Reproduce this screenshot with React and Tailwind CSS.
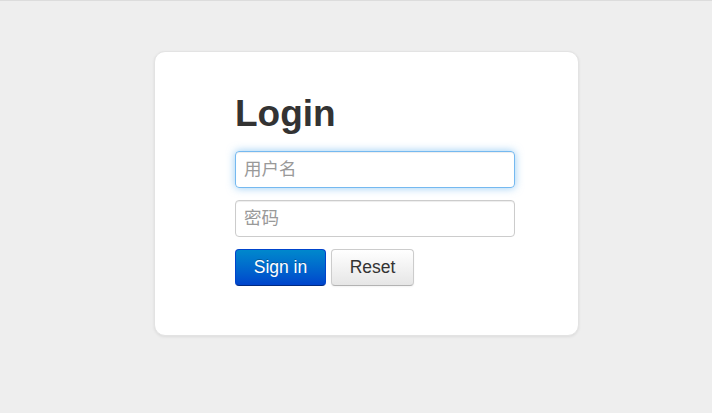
import React from 'react';

export default function App() {
    return (
        <div
            className="min-h-[413px] bg-[#eeeeee] border-t border-[#dcdcdc] pt-[50px]"
            style={{ fontFamily: '"Liberation Sans", "Noto Sans CJK SC", Arial, sans-serif' }}
        >
            <div className="ml-[154px] w-[425px] h-[285px] bg-white rounded-[11px] border border-[#e3e3e3] shadow-[0_1px_3px_rgba(0,0,0,0.08)] pl-[80px] pr-[63px] pt-[42px]">
                <h1 className="text-[37px] leading-[40px] font-bold text-[#333333]">Login</h1>

                <form className="mt-[17px] flex flex-col" onSubmit={(e) => e.preventDefault()}>
                    <input
                        type="text"
                        placeholder="用户名"
                        className="w-[280px] h-[37px] px-[8px] text-[17.5px] leading-[21px] text-[#555] rounded-[4px] border border-[rgba(82,168,236,0.8)] shadow-[inset_0_1px_1px_rgba(0,0,0,0.075),0_0_8px_rgba(82,168,236,0.6)] outline-none placeholder:text-[#999]"
                    />
                    <input
                        type="password"
                        placeholder="密码"
                        className="mt-[12px] w-[280px] h-[37px] px-[8px] text-[17.5px] leading-[21px] text-[#555] rounded-[4px] border border-[#cccccc] shadow-[inset_0_1px_1px_rgba(0,0,0,0.075)] outline-none placeholder:text-[#999]"
                    />

                    <div className="mt-[12px] flex gap-[5px]">
                        <button
                            type="submit"
                            className="h-[37px] w-[91px] text-[17.5px] leading-[21px] text-white rounded-[4px] border border-[#0044cc] border-b-[#002a80] bg-gradient-to-b from-[#0088cc] to-[#0044cc] [text-shadow:0_-1px_0_rgba(0,0,0,0.25)]"
                        >
                            Sign in
                        </button>
                        <button
                            type="reset"
                            className="h-[37px] w-[83px] text-[17.5px] leading-[21px] text-[#333333] rounded-[4px] border border-[#cccccc] border-b-[#b3b3b3] bg-gradient-to-b from-white to-[#e6e6e6] shadow-[inset_0_1px_0_rgba(255,255,255,0.2),0_1px_2px_rgba(0,0,0,0.05)]"
                        >
                            Reset
                        </button>
                    </div>
                </form>
            </div>
        </div>
    );
}
